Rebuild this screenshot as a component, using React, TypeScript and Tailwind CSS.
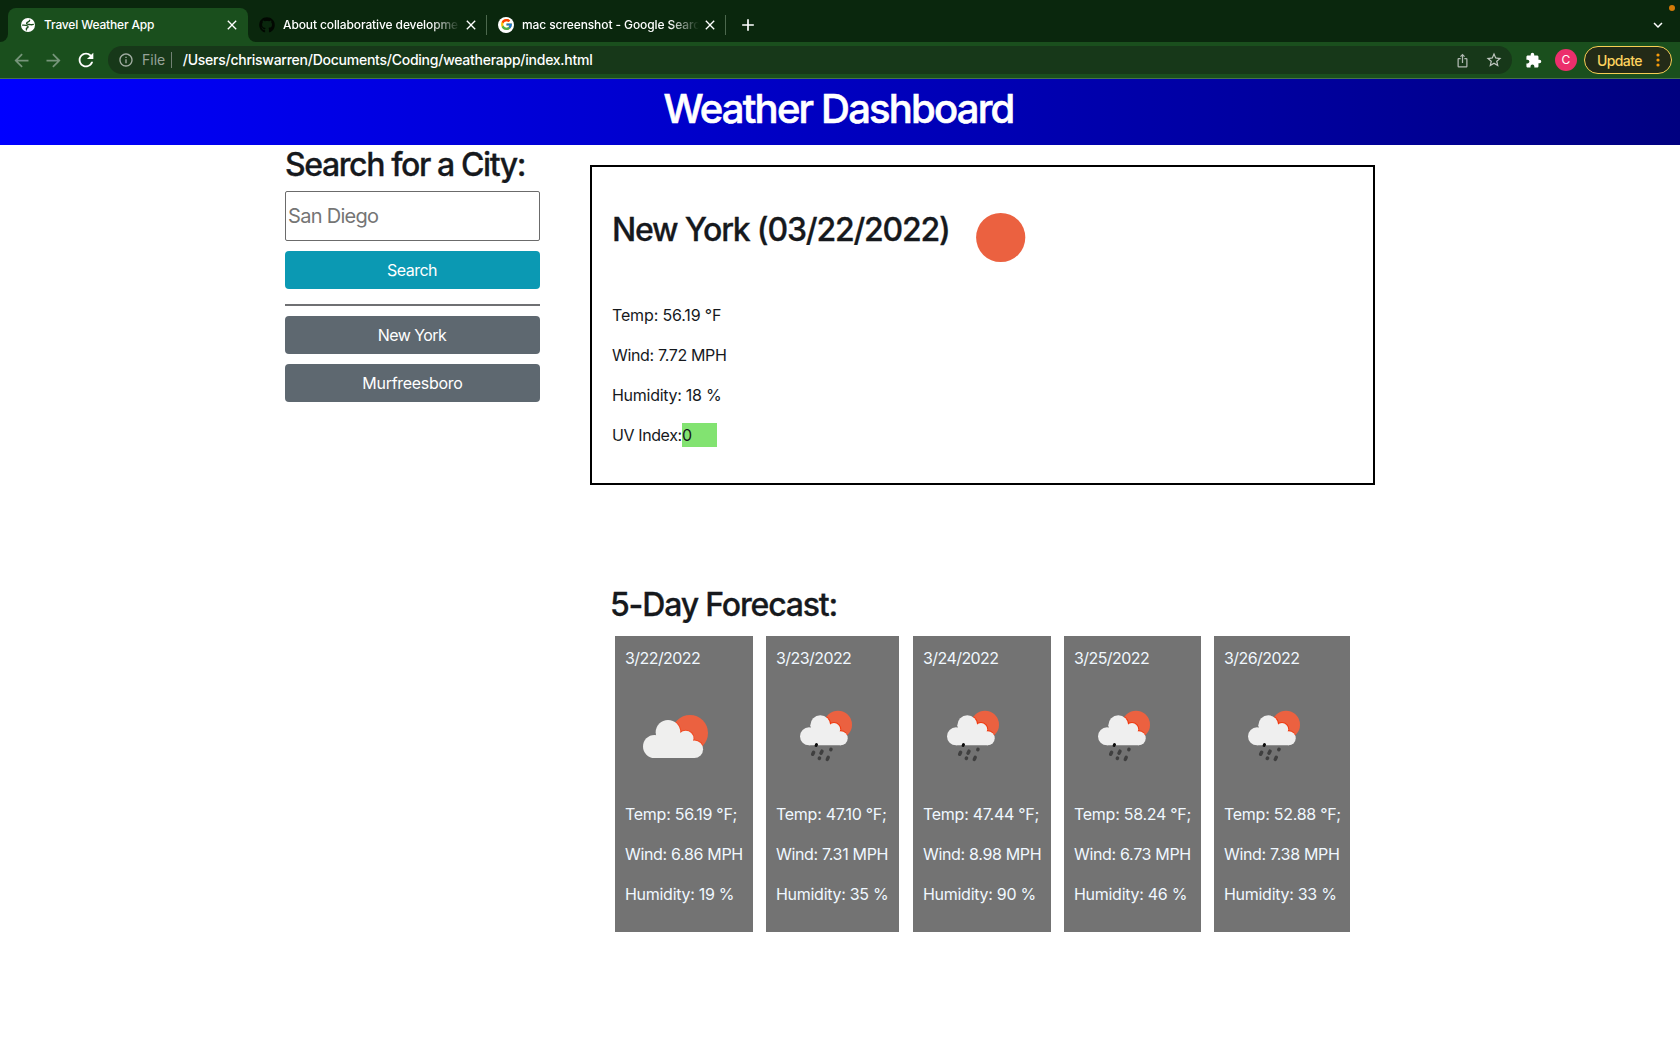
import { MdAdd, MdArrowBack, MdArrowForward, MdClose, MdExpandMore, MdExtension, MdInfoOutline, MdIosShare, MdRefresh, MdStarBorder } from "react-icons/md";
import { FaGithub } from "react-icons/fa";
import { FcGoogle } from "react-icons/fc";

const days = [
  { date: "3/22/2022", temp: "56.19", wind: "6.86", humidity: 19, rain: false, col: "w-[138px] mr-[13px]" },
  { date: "3/23/2022", temp: "47.10", wind: "7.31", humidity: 35, rain: true, col: "w-[133px] mr-[14px]" },
  { date: "3/24/2022", temp: "47.44", wind: "8.98", humidity: 90, rain: true, col: "w-[138px] mr-[13px]" },
  { date: "3/25/2022", temp: "58.24", wind: "6.73", humidity: 46, rain: true, col: "w-[137px] mr-[13px]" },
  { date: "3/26/2022", temp: "52.88", wind: "7.38", humidity: 33, rain: true, col: "w-[136px]" },
];

function CloudSun() {
  return (
    <svg width="100" height="100" viewBox="0 0 100 100" className="block">
      <clipPath id="sun-large"><circle cx="65" cy="47" r="18" /></clipPath>
      <circle cx="65" cy="47" r="18" fill="#eb6140" />
      <g clipPath="url(#sun-large)" fill="#f04a22">
        <circle cx="43" cy="46.300" r="13.300" /><circle cx="60.700" cy="52.500" r="8.800" /><circle cx="69.300" cy="63.200" r="9.700" />
      </g>
      <g fill="#efefee">
        <circle cx="29.500" cy="60.500" r="11.500" /><circle cx="43" cy="46.300" r="12.300" />
        <circle cx="60.700" cy="52.500" r="7.800" /><circle cx="69.300" cy="63.200" r="8.800" />
        <path d="M29.500 52h31l9 8v12h-40z" />
      </g>
    </svg>
  );
}

function CloudRain() {
  return (
    <svg width="100" height="100" viewBox="0 0 100 100" className="block">
      <clipPath id="sun-small"><circle cx="62" cy="38.700" r="14" /></clipPath>
      <circle cx="62" cy="38.700" r="14" fill="#eb6140" />
      <g clipPath="url(#sun-small)" fill="#f03c12">
        <circle cx="44.300" cy="39.300" r="11" /><circle cx="58" cy="43.300" r="7.200" /><circle cx="64.700" cy="52.300" r="8" />
      </g>
      <g fill="#efefef">
        <circle cx="33" cy="50.300" r="9" /><circle cx="44.300" cy="39.300" r="10" />
        <circle cx="58" cy="43.300" r="6.200" /><circle cx="64.700" cy="52.300" r="7" />
        <path d="M33 44h25l7 4v11.300H33z" />
      </g>
      <g strokeLinecap="round" strokeWidth="3.500" stroke="#3f3f3f">
        <path d="M40.500 58.600l-.4.900" stroke="#0c0c0c" strokeWidth="3" />
        <path d="M37.600 66.300l-.9 2M46 65.200l-1 2M55 63.300l-.2.400M43.500 72.100l-.2.400M52.200 71.400l-.9 2" />
      </g>
    </svg>
  );
}

function Globe() {
  return (
    <svg width="14" height="14" viewBox="0 0 14 14" className="-mt-px ml-[2px] mr-[2px]">
      <circle cx="7" cy="7" r="7" fill="#fff" />
      <path d="M8.600 2.300C8.800 4.200 5.800 3.400 5.600 5.200c0 1.500 2.600 1.200 4 1.500 1 .2 1.900 0 2.700-.3M1.600 7.100c1.800.1 4.300-.1 5.200 1 .8 1.200-.3 1.700-1.300 2.100-.5.500.2 1-.1 1.700" fill="none" stroke="#1a4f1d" strokeWidth="1.350" strokeLinecap="round" strokeLinejoin="round" />
    </svg>
  );
}

function Chrome() {
  return (
    <div className="text-white">
      <div className="relative flex h-[42px] items-end bg-[#0a270d]">
        <div className="h-2 w-2 bg-[#1a4f1d]"><div className="h-2 w-2 rounded-br-lg bg-[#0a270d]" /></div>
        <div className="flex h-[34px] w-60 items-center rounded-t-lg bg-[#1a4f1d] pl-[11px] pr-2">
          <Globe />
          <span className="ml-[7px] -mt-px flex-1 text-[12px] font-medium tracking-[-0.168px]">Travel Weather App</span>
          <MdClose className="-mt-px size-4" />
        </div>
        <div className="h-2 w-2 bg-[#1a4f1d]"><div className="h-2 w-2 rounded-bl-lg bg-[#0a270d]" /></div>
        <div className="flex h-[34px] w-[230px] items-center pl-[3px]">
          <FaGithub className="-mt-px size-4 text-[#020802]" />
          <span className="ml-2 -mt-px w-[180px] whitespace-nowrap text-[12px] font-medium tracking-[-0.111px] [mask-image:linear-gradient(to_right,black_148px,transparent_177px)]">About collaborative developme</span>
          <MdClose className="-mt-px size-4" />
        </div>
        <div className="mb-[7px] h-5 w-px bg-[#4c684d]" />
        <div className="flex h-[34px] w-[238px] items-center pl-[11px]">
          <span className="-mt-px flex size-4 items-center justify-center rounded-full bg-white"><FcGoogle className="size-[13px]" /></span>
          <span className="ml-2 -mt-px w-[180px] whitespace-nowrap text-[12px] font-medium tracking-[-0.096px] [mask-image:linear-gradient(to_right,black_148px,transparent_177px)]">mac screenshot - Google Searc</span>
          <MdClose className="-mt-px size-4" />
        </div>
        <div className="mb-[7px] h-5 w-px bg-[#4c684d]" />
        <MdAdd className="mb-[7px] ml-[12px] size-5" />
        <MdExpandMore className="mb-2 ml-auto mr-[13px] size-[18px]" />
        <div className="absolute right-[5px] top-[5px] size-[6px] rounded-full bg-[#d47a08]" />
      </div>
      <div className="flex h-9 items-center bg-[#1a4f1d] pl-[11px] pr-2">
        <MdArrowBack className="size-[21px] text-[#76957a]" />
        <MdArrowForward className="ml-[11px] size-[21px] text-[#76957a]" />
        <MdRefresh className="ml-[11px] size-[22px]" />
        <div className="ml-[11px] flex h-7 w-[1404px] items-center rounded-full bg-[#173819] pl-[10px] pr-[9px]">
          <MdInfoOutline className="size-4 text-[#a3aea4]" />
          <span className="-mt-px ml-2 text-[14px] text-[#96a298]">File</span>
          <div className="ml-[6px] h-4 w-px bg-[#728174]" />
          <span className="-mt-px ml-[10.5px] flex-1 text-[14px] font-medium tracking-[-0.249px]">/Users/chriswarren/Documents/Coding/weatherapp/index.html</span>
          <MdIosShare className="mr-[2px] size-[15px] text-[#b1b9b2]" />
          <MdStarBorder className="ml-[13px] size-[18px] text-[#c1c8c1]" />
        </div>
        <MdExtension className="ml-[13px] size-[17px]" />
        <div className="ml-[13px] flex size-[22px] items-center justify-center rounded-full bg-[#ec2f6c] text-[12px]">C</div>
        <div className="ml-[7px] flex h-7 w-[88px] items-center justify-between rounded-full border border-[#f9cf54] bg-[#232a17] pl-3 pr-[11px] text-[14px] font-medium tracking-[-0.6px] text-[#fdd35e]">
          Update
          <svg width="4" height="14" viewBox="0 0 4 14" fill="#f79a0b"><circle cx="2" cy="2" r="1.600" /><circle cx="2" cy="7" r="1.600" /><circle cx="2" cy="12" r="1.600" /></svg>
        </div>
      </div>
      <div className="h-px bg-[#48724a]" />
    </div>
  );
}

export default function App() {
  return (
    <div className="h-[1050px] w-[1680px] overflow-hidden bg-white font-['Inter',sans-serif] text-[#16191d]">
      <Chrome />
      <header className="flex h-[66px] justify-center bg-[linear-gradient(to_right,#0000ff,#000080)] pr-[3px] pt-[6px] text-[40px] font-medium leading-[48px] tracking-[-1.8px] text-white [-webkit-text-stroke:0.6px_white]">
        <h1>Weather Dashboard</h1>
      </header>
      <main className="flex pl-[285px]">
        <aside className="w-[255px]">
          <h2 className="whitespace-nowrap pt-px text-[32px] font-medium leading-[38px] tracking-[-1.4px] [-webkit-text-stroke:0.3px_#16191d]">Search for a City:</h2>
          <input placeholder="San Diego" className="mt-[7px] block h-[50px] w-full rounded-[2px] border border-[#6b6b6b] px-[2px] text-[20px] tracking-[-0.7px] placeholder:text-[#757575]" />
          <button className="mt-[10px] block h-[38px] w-full rounded bg-[#0b99b3] pr-px text-[16px] tracking-[-0.5px] text-white">Search</button>
          <div className="mt-[15px] h-[2px] bg-[#6f7073]" />
          <button className="mt-[10px] block h-[38px] w-full rounded bg-[#5e6870] pr-px text-[16px] tracking-[-0.55px] text-white">New York</button>
          <button className="mt-[10px] block h-[38px] w-full rounded bg-[#5e6870] text-[16px] tracking-[-0.283px] text-white">Murfreesboro</button>
        </aside>
        <div className="ml-[50px] w-[785px]">
          <section className="mt-5 h-[320px] border-2 border-black px-5 text-[16px] leading-6">
            <div className="flex h-[136px]">
              <h2 className="mt-[44px] w-[339px] whitespace-nowrap text-[32px] font-medium leading-[38px] tracking-[-1.2px] [-webkit-text-stroke:0.3px_#16191d]">New York (03/22/2022)</h2>
              <svg width="100" height="100" viewBox="0 0 100 100" className="mt-[20px]"><circle cx="49.700" cy="50.500" r="24.600" fill="#eb6140" /></svg>
            </div>
            <p className="tracking-[-0.145px]">Temp: 56.19 °F</p>
            <p className="mt-4 tracking-[-0.34px]">Wind: 7.72 MPH</p>
            <p className="mt-4 tracking-[-0.27px]">Humidity: 18 %</p>
            <div className="mt-4 flex tracking-[-0.4px]"><p className="w-[70px]">UV Index:</p><p className="w-[35px] bg-[#82e371]">0</p></div>
          </section>
          <h2 className="ml-5 mt-[101px] text-[32px] font-medium leading-[38px] tracking-[-1.17px] [-webkit-text-stroke:0.3px_#16191d]">5-Day Forecast:</h2>
          <section className="ml-[25px] mt-[12px] flex">
            {days.map((d) => (
              <article key={d.date} className={`h-[296px] shrink-0 whitespace-nowrap bg-[#737373] p-[10px] text-[16px] leading-6 text-[#f0f8ff] ${d.col}`}>
                <p className="tracking-[-0.57px]">{d.date}</p>
                <div className="my-4 h-[100px]">{d.rain ? <CloudRain /> : <CloudSun />}</div>
                <p className="tracking-[-0.27px]">Temp: {d.temp} °F;</p>
                <p className="mt-4 tracking-[-0.33px]">Wind: {d.wind} MPH</p>
                <p className="mt-4 tracking-[-0.28px]">Humidity: {d.humidity} %</p>
              </article>
            ))}
          </section>
        </div>
      </main>
    </div>
  );
}
